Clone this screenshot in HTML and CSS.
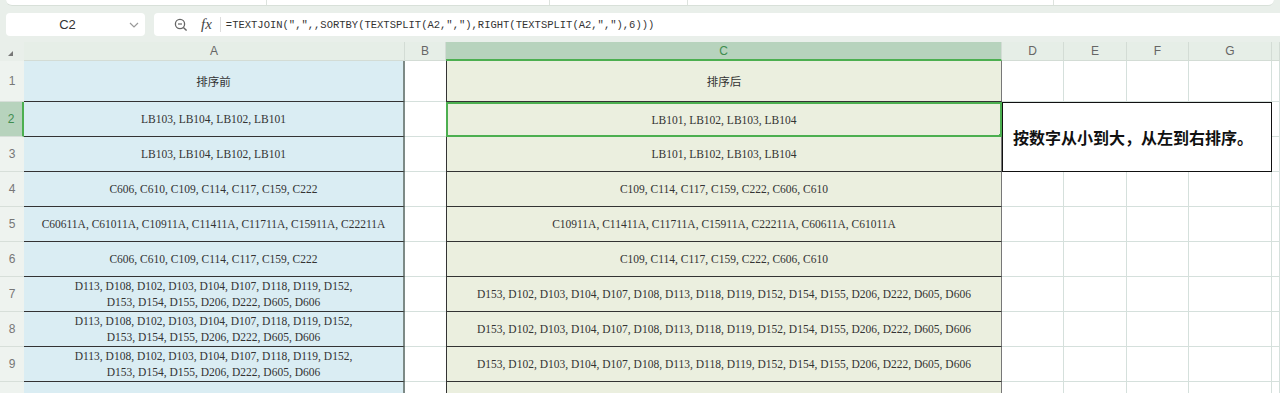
FILE: index.html
```html
<!DOCTYPE html>
<html lang="zh-CN">
<head>
    <meta charset="UTF-8">
    <meta name="viewport" content="width=device-width, initial-scale=1.0">
    <title>排序</title>
    <link rel="stylesheet" href="styles.css">
</head>
<body>

    <div class="top-strip">
        <div class="strip-part" style="width: 260px"></div>
        <div class="strip-part" style="width: 282px"></div>
        <div class="strip-part" style="width: 137px"></div>
        <div class="strip-part" style="width: 365px"></div>
        <div class="strip-part last"></div>
    </div>

    <div class="formula-row">
        <div class="name-box">
            <span class="cell-ref">C2</span>
            <svg class="chevron" width="10" height="6" viewBox="0 0 10 6"><path d="M1 1 L5 5 L9 1" fill="none" stroke="#999" stroke-width="1.2"/></svg>
        </div>
        <div class="formula-box">
            <svg class="zoom-icon" width="14" height="14" viewBox="0 0 14 14">
                <circle cx="6" cy="6" r="4.6" fill="none" stroke="#666" stroke-width="1.3"/>
                <line x1="9.4" y1="9.4" x2="12.6" y2="12.6" stroke="#666" stroke-width="1.4"/>
                <line x1="4" y1="6" x2="8" y2="6" stroke="#666" stroke-width="1.2"/>
            </svg>
            <span class="fx">fx</span>
            <span class="sep"></span>
            <span class="formula">=TEXTJOIN(″,″,,SORTBY(TEXTSPLIT(A2,″,″),RIGHT(TEXTSPLIT(A2,″,″),6)))</span>
        </div>
    </div>

    <div class="sheet">
        <div class="corner"><span class="corner-mark"></span></div>
        <div class="col-head">A</div>
        <div class="col-head">B</div>
        <div class="col-head active">C</div>
        <div class="col-head">D</div>
        <div class="col-head">E</div>
        <div class="col-head">F</div>
        <div class="col-head">G</div>
        <div class="col-head"></div>

        <div class="row-head">1</div>
        <div class="cell a">排序前</div>
        <div class="cell blank"></div>
        <div class="cell c">排序后</div>
        <div class="cell grid"></div><div class="cell grid"></div><div class="cell grid"></div><div class="cell grid"></div><div class="cell grid"></div>

        <div class="row-head active">2</div>
        <div class="cell a">LB103, LB104, LB102, LB101</div>
        <div class="cell blank"></div>
        <div class="cell c selected">LB101, LB102, LB103, LB104<span class="handle"></span></div>
        <div class="cell grid"></div><div class="cell grid"></div><div class="cell grid"></div><div class="cell grid"></div><div class="cell grid"></div>

        <div class="row-head">3</div>
        <div class="cell a">LB103, LB104, LB102, LB101</div>
        <div class="cell blank"></div>
        <div class="cell c">LB101, LB102, LB103, LB104</div>
        <div class="cell grid"></div><div class="cell grid"></div><div class="cell grid"></div><div class="cell grid"></div><div class="cell grid"></div>

        <div class="row-head">4</div>
        <div class="cell a">C606, C610, C109, C114, C117, C159, C222</div>
        <div class="cell blank"></div>
        <div class="cell c">C109, C114, C117, C159, C222, C606, C610</div>
        <div class="cell grid"></div><div class="cell grid"></div><div class="cell grid"></div><div class="cell grid"></div><div class="cell grid"></div>

        <div class="row-head">5</div>
        <div class="cell a">C60611A, C61011A, C10911A, C11411A, C11711A, C15911A, C22211A</div>
        <div class="cell blank"></div>
        <div class="cell c">C10911A, C11411A, C11711A, C15911A, C22211A, C60611A, C61011A</div>
        <div class="cell grid"></div><div class="cell grid"></div><div class="cell grid"></div><div class="cell grid"></div><div class="cell grid"></div>

        <div class="row-head">6</div>
        <div class="cell a">C606, C610, C109, C114, C117, C159, C222</div>
        <div class="cell blank"></div>
        <div class="cell c">C109, C114, C117, C159, C222, C606, C610</div>
        <div class="cell grid"></div><div class="cell grid"></div><div class="cell grid"></div><div class="cell grid"></div><div class="cell grid"></div>

        <div class="row-head">7</div>
        <div class="cell a wrap">D113, D108, D102, D103, D104, D107, D118, D119, D152,<br>D153, D154, D155, D206, D222, D605, D606</div>
        <div class="cell blank"></div>
        <div class="cell c">D153, D102, D103, D104, D107, D108, D113, D118, D119, D152, D154, D155, D206, D222, D605, D606</div>
        <div class="cell grid"></div><div class="cell grid"></div><div class="cell grid"></div><div class="cell grid"></div><div class="cell grid"></div>

        <div class="row-head">8</div>
        <div class="cell a wrap">D113, D108, D102, D103, D104, D107, D118, D119, D152,<br>D153, D154, D155, D206, D222, D605, D606</div>
        <div class="cell blank"></div>
        <div class="cell c">D153, D102, D103, D104, D107, D108, D113, D118, D119, D152, D154, D155, D206, D222, D605, D606</div>
        <div class="cell grid"></div><div class="cell grid"></div><div class="cell grid"></div><div class="cell grid"></div><div class="cell grid"></div>

        <div class="row-head">9</div>
        <div class="cell a wrap">D113, D108, D102, D103, D104, D107, D118, D119, D152,<br>D153, D154, D155, D206, D222, D605, D606</div>
        <div class="cell blank"></div>
        <div class="cell c">D153, D102, D103, D104, D107, D108, D113, D118, D119, D152, D154, D155, D206, D222, D605, D606</div>
        <div class="cell grid"></div><div class="cell grid"></div><div class="cell grid"></div><div class="cell grid"></div><div class="cell grid"></div>

        <div class="row-head"></div>
        <div class="cell a"></div>
        <div class="cell blank"></div>
        <div class="cell c"></div>
        <div class="cell grid"></div><div class="cell grid"></div><div class="cell grid"></div><div class="cell grid"></div><div class="cell grid"></div>

        <div class="note">按数字从小到大，从左到右排序。</div>
    </div>

</body>
</html>
```

FILE: styles.css
```css
body {
    margin: 0;
    background-color: #e9efea;
    font-family: "Liberation Sans", "Noto Sans CJK SC", sans-serif;
    width: 1280px;
    height: 393px;
    overflow: hidden;
}

.top-strip {
    display: flex;
    height: 5px;
    background-color: #fff;
    border-bottom: 1px solid #d8e0d9;
    border-radius: 0 0 6px 6px;
    margin: 0 6px;
}

.strip-part {
    border-right: 1px solid #dde3de;
}

.strip-part.last {
    flex: 1;
    border-right: none;
}

.formula-row {
    display: flex;
    gap: 9px;
    padding: 7px 0 0 6px;
    height: 23px;
}

.name-box {
    width: 139px;
    background-color: #fff;
    border-radius: 4px;
    display: flex;
    align-items: center;
}

.cell-ref {
    flex: 1;
    text-align: center;
    font-size: 13px;
    color: #333;
}

.chevron {
    margin-right: 6px;
}

.formula-box {
    flex: 1;
    background-color: #fff;
    border-radius: 4px 0 0 4px;
    display: flex;
    align-items: center;
}

.zoom-icon {
    margin-left: 20px;
}

.fx {
    font-family: "Liberation Serif", serif;
    font-style: italic;
    font-size: 15px;
    color: #444;
    margin-left: 13px;
}

.sep {
    width: 1px;
    height: 15px;
    background-color: #ddd;
    margin: 0 5px 0 8px;
}

.formula {
    font-family: "Liberation Mono", monospace;
    font-size: 10.5px;
    color: #333;
}

.sheet {
    position: relative;
    display: grid;
    grid-template-columns: 24px 381px 41px 556px 62px 63px 62px 83px 1fr;
    grid-template-rows: 19px 41px repeat(8, 35px) 13px;
    margin-top: 6px;
    background-color: #fff;
}

.corner {
    background-color: #e9efea;
    position: relative;
}

.corner-mark {
    position: absolute;
    left: 8px;
    top: 9px;
    width: 0;
    height: 0;
    border-left: 5px solid transparent;
    border-bottom: 5px solid #777;
}

.col-head {
    background-color: #e6eee7;
    border-right: 1px solid #d3dcd5;
    border-bottom: 1px solid #d3dcd5;
    color: #666;
    font-size: 12px;
    display: flex;
    align-items: center;
    justify-content: center;
}

.col-head.active {
    background-color: #b7d3bd;
    color: #3f8d4f;
    border-bottom: 2px solid #4caf50;
}

.row-head {
    background-color: #eef3ef;
    border-bottom: 1px solid #d7dfd9;
    color: #777;
    font-size: 12px;
    display: flex;
    align-items: center;
    justify-content: center;
}

.row-head.active {
    background-color: #b7d3bd;
    color: #3f8d4f;
    border-right: 2px solid #4caf50;
}

.cell {
    display: flex;
    align-items: center;
    justify-content: center;
    text-align: center;
    font-family: "Liberation Serif", "Noto Sans CJK SC", serif;
    font-size: 11.5px;
    color: #333;
    box-sizing: border-box;
}

.cell.a {
    background-color: #daedf3;
    border-bottom: 1px solid #333;
    border-right: 2px solid #7d8a86;
}

.cell.a.wrap {
    line-height: 16px;
}

.cell.blank {
    border-bottom: 1px solid #d5e0dc;
}

.cell.c {
    background-color: #ebefdf;
    border-left: 1px solid #333;
    border-right: 1px solid #777;
    border-bottom: 1px solid #333;
    position: relative;
}

.cell.c.selected {
    border: 2px solid #4caf50;
}

.handle {
    position: absolute;
    right: -4px;
    bottom: -4px;
    width: 5px;
    height: 5px;
    background-color: #4caf50;
}

.cell.grid {
    border-right: 1px solid #d5e0dc;
    border-bottom: 1px solid #d5e0dc;
}

.note {
    position: absolute;
    left: 1002px;
    top: 60px;
    width: 270px;
    height: 70px;
    box-sizing: border-box;
    border: 1px solid #111;
    background-color: #fff;
    display: flex;
    align-items: center;
    padding-left: 10px;
    font-family: "Noto Sans CJK SC", sans-serif;
    font-weight: bold;
    font-size: 16px;
    color: #111;
}
```
